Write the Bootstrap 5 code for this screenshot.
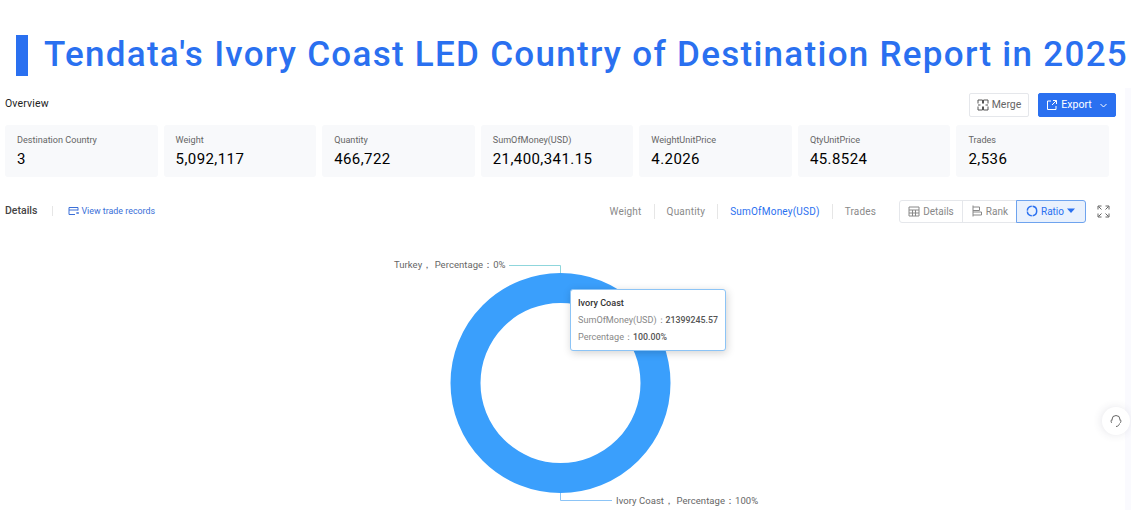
<!DOCTYPE html>
<html lang="en">
<head>
<meta charset="utf-8">
<title>Report</title>
<link href="https://cdn.jsdelivr.net/npm/bootstrap@5.3.0/dist/css/bootstrap.min.css" rel="stylesheet">
<style>
html,body{height:510px;overflow:hidden;background:#fff;}
body{font-family:Roboto,"Liberation Sans",sans-serif;color:#333;position:relative;}
.hero-wrap{height:89px;padding:35px 0 0 16px;gap:16px;}
.hero-bar{width:12px;height:41px;background:#2a70f0;flex:none;}
.hero-title{font-size:35px;font-weight:500;letter-spacing:1.28px;color:#2a70f0;line-height:38px;margin:1px 0 0;white-space:nowrap;}
.body-wrap{padding:0 22px 0 5px;}
.ov-head{height:36px;}
.ov-label{font-size:10.5px;font-weight:400;letter-spacing:.15px;color:#222;margin-top:-6px;}
.btn-merge,.btn-export{height:24px;font-size:10.5px;padding:0;border-radius:2px;width:60px;gap:3px;}
.btn-merge{border:1px solid #e5e7eb;background:#fff;color:#666;}
.btn-export{width:78px;border:1px solid #2a70f0;background:#2a70f0;color:#fff;}
.btn-row{margin-right:-7px;margin-top:-4px;gap:9px;}
.stat-row{gap:6px;}
.stat-box{flex:1 1 0;height:52px;background:#f8f9fb;border-radius:3px;padding:9px 12px;}
.stat-name{font-size:9.1px;color:#666;line-height:12px;}
.stat-val{font-size:15px;font-weight:400;color:#000;line-height:20px;margin-top:3px;letter-spacing:.42px;}
.det-row{height:26px;margin-top:21px;}
.det-label{font-size:10.5px;font-weight:500;color:#444;}
.det-sep{width:1px;height:10px;background:#e6e6e6;margin:0 15px;}
.det-link{font-size:8.9px;color:#3a6fd8;gap:2px;padding-top:1px;}
.tab-item{font-size:10px;color:#8a8a8a;padding:0 12px;position:relative;letter-spacing:.2px;}
.tab-item+.tab-item{border-left:1px solid #e6e6e6;}
.tab-on{color:#2a70f0;}
.seg-group{margin-left:12px;height:23px;}
.seg-btn{height:23px;font-size:10px;color:#888;border:1px solid #e5e7eb;background:#fff;gap:3px;padding:0 8px;margin-left:-1px;}
.seg-first{border-radius:3px 0 0 3px;}
.seg-on{border-color:#6ea3ee;background:#e9f1fd;color:#2a70f0;border-radius:0 3px 3px 0;position:relative;padding:0 10px 0 9px;}
.expand-ic{margin-left:11px;margin-right:-1px;}
.chart-area{position:relative;height:285px;margin-top:1px;}
.chart-svg{position:absolute;left:0;top:0;}
.chart-svg text{font-family:Roboto,"Liberation Sans",sans-serif;font-size:9.5px;fill:#666;letter-spacing:.05px;}
.tip-box{position:absolute;left:570px;top:64px;width:156px;height:62px;background:#fff;border:1px solid #8cc4f6;border-radius:3px;box-shadow:1px 2px 8px rgba(0,0,0,.18);padding:6px 7px;font-size:9.1px;color:#888;white-space:nowrap;}
.tip-title{color:#333;font-weight:500;line-height:14px;margin-bottom:2px;}
.tip-line{line-height:17px;}
.tip-line b{font-weight:500;font-size:8.8px;color:#555;margin-left:0;}
.edge-strip{position:absolute;left:1125px;top:88px;width:6px;height:422px;background:#fafafe;}
.help-fab{position:absolute;left:1102px;top:407px;width:28px;height:28px;border-radius:50%;background:#fff;box-shadow:-1px 0 8px rgba(60,60,90,.12);}
</style>
</head>
<body>
<div class="edge-strip"></div>
<div class="hero-wrap d-flex align-items-start">
  <div class="hero-bar"></div>
  <h1 class="hero-title">Tendata's Ivory Coast LED Country of Destination Report in 2025</h1>
</div>
<div class="body-wrap">
  <div class="ov-head d-flex justify-content-between align-items-center">
    <div class="ov-label">Overview</div>
    <div class="btn-row d-flex align-items-center">
      <button class="btn-merge d-flex align-items-center justify-content-center">
        <svg width="12" height="12" viewBox="0 0 12 12" fill="none" stroke="#555" stroke-width="1"><path d="M1 4.500V1h4.500v3.500M6.500 4.500V1H11v3.500M1 7.500V11h4.500V7.500M6.500 7.500V11H11V7.500M1 6h2.500M8.500 6H11"/></svg>Merge
      </button>
      <button class="btn-export d-flex align-items-center justify-content-center">
        <svg width="12" height="12" viewBox="0 0 12 12" fill="none" stroke="#fff" stroke-width="1"><path d="M5 2H1.500v8.500H10V7M7 1.500h3.500V5M10.500 1.500 6 6"/></svg>Export
        <svg width="9" height="9" viewBox="0 0 9 9" fill="none" stroke="#fff" stroke-width="1" class="ms-1"><path d="M1.500 3 4.500 6 7.500 3"/></svg>
      </button>
    </div>
  </div>
  <div class="stat-row d-flex">
    <div class="stat-box"><div class="stat-name">Destination Country</div><div class="stat-val">3</div></div>
    <div class="stat-box"><div class="stat-name">Weight</div><div class="stat-val">5,092,117</div></div>
    <div class="stat-box"><div class="stat-name">Quantity</div><div class="stat-val">466,722</div></div>
    <div class="stat-box"><div class="stat-name">SumOfMoney(USD)</div><div class="stat-val">21,400,341.15</div></div>
    <div class="stat-box"><div class="stat-name">WeightUnitPrice</div><div class="stat-val">4.2026</div></div>
    <div class="stat-box"><div class="stat-name">QtyUnitPrice</div><div class="stat-val">45.8524</div></div>
    <div class="stat-box"><div class="stat-name">Trades</div><div class="stat-val">2,536</div></div>
  </div>
  <div class="det-row d-flex align-items-center">
    <div class="det-label">Details</div>
    <div class="det-sep"></div>
    <div class="det-link d-flex align-items-center">
      <svg width="11" height="10" viewBox="0 0 11 10" fill="none" stroke="#3a6fd8" stroke-width="1"><path d="M1 1.500h9v3M1 1.500v7h6M1 4h9M8 7h2.500M9.500 6l1 1-1 1"/></svg>View trade records
    </div>
    <div class="ms-auto d-flex align-items-center">
      <div class="tab-item">Weight</div>
      <div class="tab-item">Quantity</div>
      <div class="tab-item tab-on">SumOfMoney(USD)</div>
      <div class="tab-item">Trades</div>
    </div>
    <div class="seg-group d-flex">
      <button class="seg-btn seg-first d-flex align-items-center">
        <svg width="12" height="11" viewBox="0 0 12 11" fill="none" stroke="#888" stroke-width="1"><path d="M1 1h10v9H1zM1 4h10M1 7h10M4.500 4v6M7.500 4v6"/></svg>Details
      </button>
      <button class="seg-btn d-flex align-items-center">
        <svg width="12" height="12" viewBox="0 0 12 12" fill="none" stroke="#888" stroke-width="1"><path d="M2 .5v11M2 2h6.500v3.500H2M2 7h8.500v3H2"/></svg>Rank
      </button>
      <button class="seg-btn seg-on d-flex align-items-center">
        <svg width="12" height="12" viewBox="0 0 12 12" fill="none" stroke="#2a70f0" stroke-width="1.500"><circle cx="6" cy="6" r="4.700" stroke-dasharray="6.500 .9"/></svg>Ratio
        <svg width="8" height="6" viewBox="0 0 8 6" fill="#2a70f0"><path d="M0 .5h8L4 5z"/></svg>
      </button>
    </div>
    <svg class="expand-ic" width="13" height="13" viewBox="0 0 13 13" fill="none" stroke="#666" stroke-width="1"><path d="M1 4.500V1h3.500M8.500 1H12v3.500M1 8.500V12h3.500M8.500 12H12V8.500M1.500 1.500 4.500 4.500M11.500 1.500 8.500 4.500M1.500 11.500 4.500 8.500M11.500 11.500 8.500 8.500"/></svg>
  </div>
</div>
<div class="chart-area">
  <svg class="chart-svg" width="1131" height="285" viewBox="0 225 1131 285">
    <circle cx="560.500" cy="383" r="95" fill="none" stroke="#3a9ffc" stroke-width="30"/>
    <path d="M509 265.500h51.500V273" fill="none" stroke="#8fd6dc" stroke-width="1"/>
    <path d="M560.500 493v7.500H612" fill="none" stroke="#8cc4f6" stroke-width="1"/>
    <text x="394" y="268">Turkey， Percentage：0%</text>
    <text x="616" y="503.500">Ivory Coast， Percentage：100%</text>
  </svg>
  <div class="tip-box">
    <div class="tip-title">Ivory Coast</div>
    <div class="tip-line">SumOfMoney(USD)：<b>21399245.57</b></div>
    <div class="tip-line">Percentage：<b>100.00%</b></div>
  </div>
</div>
<div class="help-fab d-flex align-items-center justify-content-center">
  <svg width="14" height="14" viewBox="0 0 14 14" fill="none" stroke="#666" stroke-width="1"><path d="M3 6.500V5.500a4 4 0 0 1 8 0v1M3 5.500C1.800 6 1.800 8.500 3 9M11 5.500c1.200.5 1.200 3 0 3.500M10.500 9.500c-.3 1.800-1.700 3-3.500 3"/></svg>
</div>
<script src="https://cdn.jsdelivr.net/npm/bootstrap@5.3.0/dist/js/bootstrap.bundle.min.js"></script>
</body>
</html>
